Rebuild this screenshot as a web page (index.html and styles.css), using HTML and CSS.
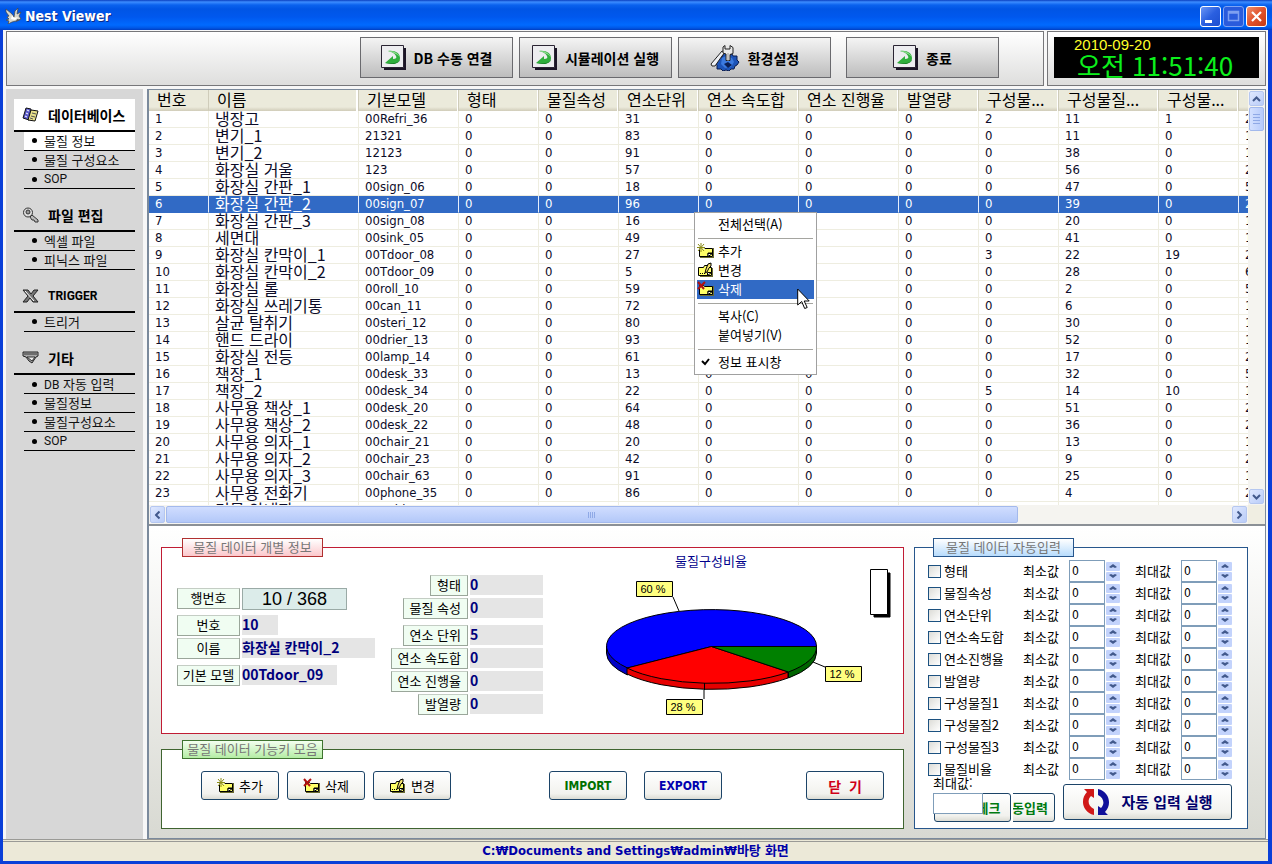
FILE: index.html
```html
<!DOCTYPE html>
<html lang="ko">
<head>
<meta charset="utf-8">
<title>Nest Viewer</title>
<link rel="stylesheet" href="styles.css">
</head>
<body>
<svg class="defs" aria-hidden="true">
  <symbol id="i-go" viewBox="0 0 25 25">
    <path d="M3 3h22v22H3z" fill="#1b1526"/>
    <path d="M.5.5h22v22H.5z" fill="#ededf0" stroke="#2a2433"/>
    <path d="M7 6c7-1 12 2 12 7s-6 7-15 5l8-7v3c3 0 4-1 3-3s-3-4-8-5z" fill="#2fae3c"/>
    <path d="M7 6c6 0 9 1 12 6-3-3-6-4-12-6z" fill="#8fdc8f"/>
    <path d="M4 18c9 1 14 0 15-4 0 5-8 6-15 4z" fill="#0d7a1c"/>
  </symbol>
  <symbol id="i-gear" viewBox="0 0 30 26">
    <path d="M14 8l3-1 1 3 4-1 1 2 4 0 0 4 2 2-2 3-2 1-1 3-3 0-2 2-3-1-3 1-2-2-4 0 0-4-2-2 3-3 0-3 4 0z" fill="#1d54b8" stroke="#0a1c50"/>
    <path d="M12 13l4-2 6 2 2 4-3 5-6 1-4-4z" fill="#3b7ae0"/>
    <path d="M14 19l4-2 4 3-4 3z" fill="#0b1f55"/>
    <path d="M1 19L12 6l3 1-3 4-7 10q-4 1-4-2z" fill="#eef0f4" stroke="#222"/>
    <path d="M13 2l2-1.500v3.500h5V.500l3 2v6l-3 1v6h-4V9l-3-1z" fill="#e8e8e8" stroke="#222"/>
    <path d="M18 8v8" stroke="#999"/>
  </symbol>
  <symbol id="i-note" viewBox="0 0 17 15">
    <path d="M3 15h14V5h-1v9H3z" fill="#6b6b30"/>
    <path d="M2.500 4.500h4l1 1h8v8h-13z" fill="#ffff66" stroke="#000"/>
    <path d="M11 13V10h4" fill="none" stroke="#000"/>
    <path d="M11 13.500v-3h4.500z" fill="#fff" stroke="#000"/>
  </symbol>
  <symbol id="i-add" viewBox="0 0 17 15">
    <use href="#i-note" width="17" height="15"/>
    <path d="M0 0h8v7H0z" fill="#fff" opacity=".5"/>
    <path d="M4 0v9M0 4.500h8M1 1l6 7M7 1L1 8" stroke="#8c8c18"/>
  </symbol>
  <symbol id="i-del" viewBox="0 0 17 15">
    <use href="#i-note" width="17" height="15"/>
    <path d="M1 1l6 7M8 1L1 8" stroke="#b01010" stroke-width="2"/>
  </symbol>
  <symbol id="i-edit" viewBox="0 0 17 15">
    <path d="M3 15h13V6h-1v8H3z" fill="#6b6b30"/>
    <path d="M1.500 5.500h5l1-2h3l1 2h3v8h-13z" fill="#ffff66" stroke="#000"/>
    <path d="M3 11.500h1m1 0h1m1 0h1" stroke="#000"/>
    <path d="M8 11l1-4 2-5 3-1 0 3-2 2-2 4z" fill="#f2e070" stroke="#000"/>
    <path d="M10.500 13.500v-3h4z" fill="#fff" stroke="#000"/>
  </symbol>
  <symbol id="i-up" viewBox="0 0 9 6"><path d="M1 5l3.500-3.500L8 5" fill="none" stroke="#42598c" stroke-width="2"/></symbol>
</svg>

<div class="window">
  <header class="titlebar">
    <svg width="17" height="16" viewBox="0 0 17 16" aria-hidden="true">
      <path d="M1 1l6 5 2 3 1-6 3-3-1 6 4-2-2 4 2 3-5 2-4 1-4 2 1-3-3-1 3-1-2-2 2-1-3-4z" fill="#d8d8d0" stroke="#444" stroke-width=".7"/>
      <path d="M7 7l2 3 4-1-3 3-4-1z" fill="#fff"/>
      <path d="M12 11l3 1-4 2z" fill="#555"/>
    </svg>
    <h1>Nest Viewer</h1>
    <div class="caption-buttons">
      <button class="cap" type="button" aria-label="최소화"><svg width="19" height="19"><path d="M4 13h7v3H4z" fill="#fff"/></svg></button>
      <button class="cap cap-off" type="button" aria-label="최대화" disabled><svg width="19" height="19"><path d="M4.500 4.500h10v9h-10zM4 6h11" fill="none" stroke="#7d9ff0" stroke-width="1.500"/></svg></button>
      <button class="cap cap-close" type="button" aria-label="닫기"><svg width="19" height="19"><path d="M5 5l9 9M14 5l-9 9" stroke="#fff" stroke-width="2.200"/></svg></button>
    </div>
  </header>

  <div class="client">
    <div class="top">
      <div class="toolbar">
        <button class="tool" type="button"><svg width="25" height="25"><use href="#i-go"/></svg>DB 수동 연결</button>
        <button class="tool" type="button"><svg width="25" height="25"><use href="#i-go"/></svg>시뮬레이션 실행</button>
        <button class="tool tool-set" type="button"><svg width="30" height="26"><use href="#i-gear"/></svg>환경설정</button>
        <button class="tool" type="button"><svg width="25" height="25"><use href="#i-go"/></svg>종료</button>
      </div>
      <div class="clock"><div class="lcd"><div class="date">2010-09-20</div><div class="time">오전 11:51:40</div></div></div>
    </div>

    <div class="middle">
      <nav class="side">
        <section>
          <h2 class="current"><svg width="17" height="16" viewBox="0 0 17 16"><path d="M4 1l5 1-2 11-6-2z" fill="#5a5ac8" stroke="#111"/><path d="M5 3l2 1M4 6l2 1M3 9l2 1" stroke="#fff"/><path d="M9 3l7 1-3 10-7-1z" fill="#e8e08a" stroke="#111"/><path d="M10 6l4 1M9 9l4 1M8 11l3 1" stroke="#555"/></svg>데이터베이스</h2>
          <ul><li class="current"><a href="#">물질 정보</a></li><li><a href="#">물질 구성요소</a></li><li><a class="latin" href="#">SOP</a></li></ul>
        </section>
        <section>
          <h2><svg width="17" height="16" viewBox="0 0 17 16"><circle cx="6" cy="5.500" r="4.500" fill="#ddd" stroke="#333"/><circle cx="6" cy="5" r="2" fill="#999" stroke="#333"/><path d="M8 10l2-2 6 5v2h-3l-1-2-2 0z" fill="#bbb" stroke="#333"/></svg>파일 편집</h2>
          <ul><li><a href="#">엑셀 파일</a></li><li><a href="#">피닉스 파일</a></li></ul>
        </section>
        <section>
          <h2 class="latin"><svg width="17" height="14" viewBox="0 0 17 14"><path d="M1 1h5l3 4 3-4h4l-5 6 5 6h-5l-3-4-3 4H1l5-6z" fill="#777" stroke="#222"/><path d="M3 2l9 10" stroke="#fff"/></svg>TRIGGER</h2>
          <ul><li><a href="#">트리거</a></li></ul>
        </section>
        <section>
          <h2><svg width="17" height="13" viewBox="0 0 17 13"><path d="M1 1h15v4l-2 1-4 6-3-2-3-4-3-1z" fill="#aaa" stroke="#222"/><path d="M2 3h13M5 6h8l-3 4z" fill="#eee" stroke="#333"/></svg>기타</h2>
          <ul><li><a href="#"><span><span class="latin">DB</span> 자동 입력</span></a></li><li><a href="#">물질정보</a></li><li><a href="#">물질구성요소</a></li><li><a class="latin" href="#">SOP</a></li></ul>
        </section>
      </nav>

      <main>
        <div class="grid-pane">
          <div class="viewport">
            <table>
              <colgroup><col class="w60"><col class="w150"><col class="w100"><col class="w80"><col class="w80"><col class="w80"><col class="w100"><col class="w100"><col class="w80"><col class="w80"><col class="w100"><col class="w80"><col class="w80"></colgroup>
              <thead><tr><th>번호<th>이름<th>기본모델<th>형태<th>물질속성<th>연소단위<th>연소 속도합<th>연소 진행율<th>발열량<th>구성물...<th>구성물질...<th>구성물...<th></tr></thead>
              <tbody>
              <tr><td>1<td>냉장고<td>00Refri_36<td>0<td>0<td>31<td>0<td>0<td>0<td>2<td>11<td>1<td>2
              <tr><td>2<td>변기_1<td>21321<td>0<td>0<td>83<td>0<td>0<td>0<td>0<td>11<td>0<td>1
              <tr><td>3<td>변기_2<td>12123<td>0<td>0<td>91<td>0<td>0<td>0<td>0<td>38<td>0<td>1
              <tr><td>4<td>화장실 거울<td>123<td>0<td>0<td>57<td>0<td>0<td>0<td>0<td>56<td>0<td>2
              <tr><td>5<td>화장실 간판_1<td>00sign_06<td>0<td>0<td>18<td>0<td>0<td>0<td>0<td>47<td>0<td>5
              <tr class="sel"><td>6<td>화장실 간판_2<td>00sign_07<td>0<td>0<td>96<td>0<td>0<td>0<td>0<td>39<td>0<td>2
              <tr><td>7<td>화장실 간판_3<td>00sign_08<td>0<td>0<td>16<td>0<td>0<td>0<td>0<td>20<td>0<td>1
              <tr><td>8<td>세면대<td>00sink_05<td>0<td>0<td>49<td>0<td>0<td>0<td>0<td>41<td>0<td>1
              <tr><td>9<td>화장실 칸막이_1<td>00Tdoor_08<td>0<td>0<td>27<td>0<td>0<td>0<td>3<td>22<td>19<td>2
              <tr><td>10<td>화장실 칸막이_2<td>00Tdoor_09<td>0<td>0<td>5<td>0<td>0<td>0<td>0<td>28<td>0<td>6
              <tr><td>11<td>화장실 롤<td>00roll_10<td>0<td>0<td>59<td>0<td>0<td>0<td>0<td>2<td>0<td>5
              <tr><td>12<td>화장실 쓰레기통<td>00can_11<td>0<td>0<td>72<td>0<td>0<td>0<td>0<td>6<td>0<td>1
              <tr><td>13<td>살균 탈취기<td>00steri_12<td>0<td>0<td>80<td>0<td>0<td>0<td>0<td>30<td>0<td>1
              <tr><td>14<td>핸드 드라이<td>00drier_13<td>0<td>0<td>93<td>0<td>0<td>0<td>0<td>52<td>0<td>1
              <tr><td>15<td>화장실 전등<td>00lamp_14<td>0<td>0<td>61<td>0<td>0<td>0<td>0<td>17<td>0<td>2
              <tr><td>16<td>책장_1<td>00desk_33<td>0<td>0<td>13<td>0<td>0<td>0<td>0<td>32<td>0<td>5
              <tr><td>17<td>책장_2<td>00desk_34<td>0<td>0<td>22<td>0<td>0<td>0<td>5<td>14<td>10<td>1
              <tr><td>18<td>사무용 책상_1<td>00desk_20<td>0<td>0<td>64<td>0<td>0<td>0<td>0<td>51<td>0<td>2
              <tr><td>19<td>사무용 책상_2<td>00desk_22<td>0<td>0<td>48<td>0<td>0<td>0<td>0<td>36<td>0<td>2
              <tr><td>20<td>사무용 의자_1<td>00chair_21<td>0<td>0<td>20<td>0<td>0<td>0<td>0<td>13<td>0<td>1
              <tr><td>21<td>사무용 의자_2<td>00chair_23<td>0<td>0<td>42<td>0<td>0<td>0<td>0<td>9<td>0<td>2
              <tr><td>22<td>사무용 의자_3<td>00chair_63<td>0<td>0<td>91<td>0<td>0<td>0<td>0<td>25<td>0<td>1
              <tr><td>23<td>사무용 전화기<td>00phone_35<td>0<td>0<td>86<td>0<td>0<td>0<td>0<td>4<td>0<td>2
              <tr><td>24<td>건물 안내판<td>00guide_24<td>0<td>0<td>10<td>0<td>0<td>0<td>0<td>8<td>0<td>1
              </tbody>
            </table>
          </div>
          <div class="vbar">
            <button class="arrow" type="button" aria-label="위로"><svg width="9" height="6"><use href="#i-up"/></svg></button>
            <div class="thumb"></div>
            <button class="arrow last" type="button" aria-label="아래로"><svg class="to-down" width="9" height="6"><use href="#i-up"/></svg></button>
          </div>
          <div class="hbar">
            <button class="arrow" type="button" aria-label="왼쪽"><svg class="to-left" width="9" height="6"><use href="#i-up"/></svg></button>
            <div class="thumb"></div>
            <button class="arrow last" type="button" aria-label="오른쪽"><svg class="to-right" width="9" height="6"><use href="#i-up"/></svg></button>
          </div>

          <div class="menu" role="menu">
            <button type="button" role="menuitem"><span></span>전체선택(A)</button>
            <hr>
            <button type="button" role="menuitem"><span><svg width="17" height="15"><use href="#i-add"/></svg></span>추가</button>
            <button type="button" role="menuitem"><span><svg width="17" height="15"><use href="#i-edit"/></svg></span>변경</button>
            <button class="hot" type="button" role="menuitem"><span><svg width="17" height="15"><use href="#i-del"/></svg></span>삭제</button>
            <hr>
            <button type="button" role="menuitem"><span></span>복사(C)</button>
            <button type="button" role="menuitem"><span></span>붙여넣기(V)</button>
            <hr>
            <button type="button" role="menuitem"><span><svg width="17" height="9"><path d="M5 4l3 3 4-5" fill="none" stroke="#000" stroke-width="2"/></svg></span>정보 표시창</button>
            <svg class="pointer" width="13" height="22" viewBox="0 0 13 22"><path d="M.700 1v16l4-3.500 3 7 2.500-1-3-6.500h5z" fill="#fff" stroke="#000"/></svg>
          </div>
        </div>

        <div class="panel">
          <fieldset class="red">
            <legend><span>물질 데이터 개별 정보</span></legend>
            <div class="detail">
              <dl class="ident">
                <dt>행번호</dt><dd class="pos">10 / 368</dd>
                <dt>번호</dt><dd class="short">10</dd>
                <dt>이름</dt><dd>화장실 칸막이_2</dd>
                <dt>기본 모델</dt><dd class="mid">00Tdoor_09</dd>
              </dl>
              <dl class="props">
                <dt>형태</dt><dd>0</dd>
                <dt>물질 속성</dt><dd>0</dd>
                <dt>연소 단위</dt><dd>5</dd>
                <dt>연소 속도합</dt><dd>0</dd>
                <dt>연소 진행율</dt><dd>0</dd>
                <dt>발열량</dt><dd>0</dd>
              </dl>
              <svg class="chart" width="345" height="176" viewBox="550 557 345 176" role="img" aria-label="물질구성비율">
                <text class="chart-title" x="711" y="566">물질구성비율</text>
                <g stroke="#000" stroke-width="1">
                  <path d="M673 597l6 14M704 690v9M813 662l12 5" fill="none"/>
                  <path d="M606.500 646v7a105 37 0 0 0 21 22v-7z" fill="#0000c8"/>
                  <path d="M816.500 646v7a105 37 0 0 1-28 25v-7z" fill="#006400"/>
                  <path d="M627 667v7a105 37 0 0 0 161 4v-7z" fill="#e60000"/>
                  <path d="M711.500 646.500h105a105 36.500 0 1 0-189 21.500z" fill="#0000ff"/>
                  <path d="M711.500 646.500L627 668a105 36.500 0 0 0 161.500 4z" fill="#ff0000"/>
                  <path d="M711.500 646.500L788.500 672a105 36.500 0 0 0 28-25.500z" fill="#008000"/>
                  <path d="M704.500 683v7"/>
                  <path d="M636.500 581.500h36v15h-36zM825.500 666.500h36v15h-36zM666.500 699.500h36v15h-36z" fill="#ffff80"/>
                  <path d="M874 573h16v44h-16z" fill="#000"/>
                  <path d="M870.500 569.500h17v45h-17z" fill="#fff"/>
                </g>
                <g class="chart-label"><text x="653" y="593">60 %</text><text x="842" y="678">12 %</text><text x="683" y="711">28 %</text></g>
              </svg>
            </div>
          </fieldset>

          <fieldset class="green">
            <legend><span>물질 데이터 기능키 모음</span></legend>
            <div class="keys">
              <button class="btn" type="button"><svg width="17" height="15"><use href="#i-add"/></svg>추가</button>
              <button class="btn" type="button"><svg width="17" height="15"><use href="#i-del"/></svg>삭제</button>
              <button class="btn" type="button"><svg width="17" height="15"><use href="#i-edit"/></svg>변경</button>
              <button class="btn import" type="button">IMPORT</button>
              <button class="btn export" type="button">EXPORT</button>
              <button class="btn close" type="button">닫&nbsp; 기</button>
            </div>
          </fieldset>

          <fieldset class="blue">
            <legend><span>물질 데이터 자동입력</span></legend>
            <div class="auto">
              <div class="row"><label><input type="checkbox">형태</label><label for="a1">최소값</label><input id="a1" type="text" value="0"><span class="spin"><button type="button" aria-label="증가"></button><button type="button" aria-label="감소"></button></span><label class="max" for="b1">최대값</label><input id="b1" type="text" value="0"><span class="spin"><button type="button" aria-label="증가"></button><button type="button" aria-label="감소"></button></span></div>
              <div class="row"><label><input type="checkbox">물질속성</label><label for="a2">최소값</label><input id="a2" type="text" value="0"><span class="spin"><button type="button" aria-label="증가"></button><button type="button" aria-label="감소"></button></span><label class="max" for="b2">최대값</label><input id="b2" type="text" value="0"><span class="spin"><button type="button" aria-label="증가"></button><button type="button" aria-label="감소"></button></span></div>
              <div class="row"><label><input type="checkbox">연소단위</label><label for="a3">최소값</label><input id="a3" type="text" value="0"><span class="spin"><button type="button" aria-label="증가"></button><button type="button" aria-label="감소"></button></span><label class="max" for="b3">최대값</label><input id="b3" type="text" value="0"><span class="spin"><button type="button" aria-label="증가"></button><button type="button" aria-label="감소"></button></span></div>
              <div class="row"><label><input type="checkbox">연소속도합</label><label for="a4">최소값</label><input id="a4" type="text" value="0"><span class="spin"><button type="button" aria-label="증가"></button><button type="button" aria-label="감소"></button></span><label class="max" for="b4">최대값</label><input id="b4" type="text" value="0"><span class="spin"><button type="button" aria-label="증가"></button><button type="button" aria-label="감소"></button></span></div>
              <div class="row"><label><input type="checkbox">연소진행율</label><label for="a5">최소값</label><input id="a5" type="text" value="0"><span class="spin"><button type="button" aria-label="증가"></button><button type="button" aria-label="감소"></button></span><label class="max" for="b5">최대값</label><input id="b5" type="text" value="0"><span class="spin"><button type="button" aria-label="증가"></button><button type="button" aria-label="감소"></button></span></div>
              <div class="row"><label><input type="checkbox">발열량</label><label for="a6">최소값</label><input id="a6" type="text" value="0"><span class="spin"><button type="button" aria-label="증가"></button><button type="button" aria-label="감소"></button></span><label class="max" for="b6">최대값</label><input id="b6" type="text" value="0"><span class="spin"><button type="button" aria-label="증가"></button><button type="button" aria-label="감소"></button></span></div>
              <div class="row"><label><input type="checkbox">구성물질1</label><label for="a7">최소값</label><input id="a7" type="text" value="0"><span class="spin"><button type="button" aria-label="증가"></button><button type="button" aria-label="감소"></button></span><label class="max" for="b7">최대값</label><input id="b7" type="text" value="0"><span class="spin"><button type="button" aria-label="증가"></button><button type="button" aria-label="감소"></button></span></div>
              <div class="row"><label><input type="checkbox">구성물질2</label><label for="a8">최소값</label><input id="a8" type="text" value="0"><span class="spin"><button type="button" aria-label="증가"></button><button type="button" aria-label="감소"></button></span><label class="max" for="b8">최대값</label><input id="b8" type="text" value="0"><span class="spin"><button type="button" aria-label="증가"></button><button type="button" aria-label="감소"></button></span></div>
              <div class="row"><label><input type="checkbox">구성물질3</label><label for="a9">최소값</label><input id="a9" type="text" value="0"><span class="spin"><button type="button" aria-label="증가"></button><button type="button" aria-label="감소"></button></span><label class="max" for="b9">최대값</label><input id="b9" type="text" value="0"><span class="spin"><button type="button" aria-label="증가"></button><button type="button" aria-label="감소"></button></span></div>
              <div class="row"><label><input type="checkbox">물질비율</label><label for="a10">최소값</label><input id="a10" type="text" value="0"><span class="spin"><button type="button" aria-label="증가"></button><button type="button" aria-label="감소"></button></span><label class="max" for="b10">최대값</label><input id="b10" type="text" value="0"><span class="spin"><button type="button" aria-label="증가"></button><button type="button" aria-label="감소"></button></span></div>
            </div>
            <div class="foot">
              <div class="foot-left">
                <label for="limit">최대값:</label>
                <div class="pair">
                  <button class="btn check" type="button">체크</button>
                  <span class="clip"><button class="btn" type="button">자동입력</button></span>
                  <input id="limit" type="text">
                </div>
              </div>
              <button class="btn run" type="button"><svg width="28" height="28" viewBox="0 0 28 28"><path d="M12 1v9L9 8C5 12 6 18 12 21v6C0 24-2 11 5 4L2 1z" fill="#d01818"/><path d="M16 27v-9l3 2c4-4 3-10-3-13V1c12 3 14 16 7 23l3 3z" fill="#10109a"/></svg>자동 입력 실행</button>
            </div>
          </fieldset>
        </div>
      </main>
    </div>
    <footer class="status">C:₩Documents and Settings₩admin₩바탕 화면</footer>
  </div>
</div>
</body>
</html>
```

FILE: styles.css
```css
* { box-sizing: border-box; }
body {
  margin: 0;
  font: 13px/16px "Noto Sans CJK KR", "Liberation Sans", sans-serif;
  color: #000;
}
button, input { font: inherit; color: inherit; margin: 0; padding: 0; }
h1, h2, ul, dl, dd { margin: 0; padding: 0; }
.defs { position: absolute; width: 0; height: 0; }

.window {
  display: flex;
  flex-direction: column;
  height: 100vh;
  min-height: 700px;
  min-width: 1100px;
  overflow: hidden;
  background: #0a3fd8;
}

/* title bar */
.titlebar {
  display: flex;
  align-items: center;
  gap: 3px;
  height: 30px;
  padding: 2px 5px 0;
  background: linear-gradient(#0a3fc0 0, #3c8cff 2px, #0a62ee 5px, #0055e5 9px, #0058ee 17px, #006aff 25px, #0057e6 28px, #003dc0 30px);
}
.titlebar h1 {
  flex: 1;
  font: bold 14px/16px "DejaVu Sans Condensed", sans-serif;
  color: #fff;
  text-shadow: 1px 1px #0a2a88;
}
.caption-buttons { display: flex; gap: 2px; }
.cap {
  width: 21px;
  height: 21px;
  border: 1px solid #fff;
  border-radius: 3px;
  background: linear-gradient(135deg, #6b96f5, #2a5fe0 50%, #1c4fd0);
}
.cap svg { display: block; }
.cap-off { border-color: #7da3f4; background: #2a5bdc; }
.cap-close { background: linear-gradient(135deg, #f0906c, #e0512c 50%, #c43a14); }

/* client area */
.client {
  flex: 1;
  min-height: 0;
  display: flex;
  flex-direction: column;
  margin: 0 4px 3px 3px;
  background: #f7f7f7;
}
.top { display: flex; gap: 3px; padding: 1px 2px 3px 3px; }
.toolbar, .clock {
  height: 55px;
  border: 1px solid #77777a;
  background: linear-gradient(#fff, #dededd);
}
.toolbar {
  flex: 1;
  display: flex;
  align-items: flex-start;
  justify-content: flex-end;
  gap: 6px;
  padding: 5px 44px 0 0;
}
.tool {
  display: flex;
  align-items: center;
  justify-content: center;
  gap: 8px;
  width: 153px;
  height: 41px;
  border: 1px solid #6a6a6e;
  background: linear-gradient(#f4f4f4, #bdbdbd);
  font-size: 14px;
  font-weight: bold;
  white-space: nowrap;
}
.tool-set { margin-right: 9px; }
.clock { width: 219px; padding: 5px 6px; }
.lcd { height: 41px; padding: 0 0 0 20px; background: #000; }
.date { font: 15px/16px "Liberation Sans", sans-serif; color: #ffff2a; }
.time { padding-left: 3px; font-size: 26px; line-height: 24px; color: #0cf01c; }

.middle { flex: 1; min-height: 0; display: flex; gap: 4px; padding: 0 2px 0 3px; }

/* side menu */
.side { width: 137px; padding: 10px 8px; background: #d7d7d7; }
.side section { margin-bottom: 10px; }
.side h2 {
  display: flex;
  align-items: center;
  gap: 9px;
  height: 33px;
  padding-left: 8px;
  border-bottom: 2px solid #000;
  font-size: 14px;
  line-height: 18px;
}
.side h2 svg { flex: none; }
.side h2.latin { font: bold 12px/16px Roboto, sans-serif; }
.side ul { margin-left: 10px; list-style: none; }
.side li { height: 19px; border-bottom: 1px solid #000; line-height: 17px; }
.side .current { background: #fff; }
.side a { display: flex; align-items: center; gap: 5px; color: #111; text-decoration: none; }
.side a::before { content: ""; width: 5px; height: 5px; margin-left: 8px; margin-right: 2px; border-radius: 50%; background: #000; }
.side a.latin, .side span.latin { font: 12px/18px Roboto, sans-serif; }

/* data grid */
main { flex: 1; min-width: 0; display: flex; flex-direction: column; border: 1px solid #7b8a9c; border-width: 1px 1px 1px 2px; }
.grid-pane {
  position: relative;
  flex: 1;
  min-height: 0;
  display: grid;
  grid-template: minmax(0, 1fr) 19px / minmax(0, 1fr) 17px;
  background: #f0eee2;
  border-bottom: 2px solid #8b9096;
}
.viewport { overflow: hidden; background: #fff; }
table { table-layout: fixed; width: 1070px; border-collapse: separate; border-spacing: 0; }
.w60 { width: 60px; } .w80 { width: 80px; } .w100 { width: 100px; } .w150 { width: 150px; }
th {
  height: 21px;
  padding: 0 0 2px 8px;
  background: linear-gradient(90deg, transparent 98%, #fff 98%), linear-gradient(#ebeadb 17px, #d0ccb8);
  box-shadow: inset -1px 0 #cfccba;
  font-size: 16px;
  font-weight: normal;
  line-height: 19px;
  text-align: left;
  white-space: nowrap;
}
td {
  height: 17px;
  padding: 0 0 0 6px;
  border-right: 1px solid #eeede0;
  border-bottom: 1px solid #eeede0;
  font: 13px/16px "DejaVu Sans Condensed", sans-serif;
  color: #0c0c28;
  white-space: nowrap;
}
td:nth-child(2) { padding-bottom: 2px; font: 16px/14px "Noto Sans CJK KR", sans-serif; }
.sel td { background: #316ac5; color: #fff; border-bottom-color: #316ac5; border-right-color: #e6eefc; }

.vbar, .hbar { display: flex; background: #f5f4f0; padding: 1px; gap: 1px; }
.vbar { flex-direction: column; }
.arrow {
  display: grid;
  place-items: center;
  flex: none;
  width: 15px;
  height: 15px;
  border: 1px solid #b5c7f0;
  border-radius: 2px;
  background: linear-gradient(135deg, #dfe8ff, #b9ccf8);
}
.hbar .arrow { height: 17px; }
.vbar .last { margin-top: auto; }
.hbar .last { margin-left: auto; }
.to-down { transform: rotate(180deg); }
.to-left { transform: rotate(-90deg); }
.to-right { transform: rotate(90deg); }
.thumb { border: 1px solid #a3b9ec; border-radius: 2px; }
.vbar .thumb {
  width: 15px;
  height: 24px;
  background: repeating-linear-gradient(#8fa9e6 0 1px, transparent 1px 3px) center / 7px 10px no-repeat, linear-gradient(90deg, #d3e0ff, #b7cbfb);
}
.hbar .thumb {
  width: 77.7%;
  background: repeating-linear-gradient(90deg, #8fa9e6 0 1px, transparent 1px 2px) center / 8px 6px no-repeat, linear-gradient(#d0ddff, #b3c8f8);
}

/* context menu */
.menu {
  position: absolute;
  left: 545px;
  top: 122px;
  width: 123px;
  padding: 2px;
  border: 1px solid #a0a0a0;
  background: #fff;
}
.menu button {
  display: flex;
  align-items: center;
  width: 100%;
  height: 19px;
  padding-bottom: 2px;
  border: 0;
  background: none;
  text-align: left;
  white-space: nowrap;
}
.menu span { display: flex; width: 21px; }
.menu .hot { background: #316ac5; color: #fff; }
.menu hr { height: 1px; margin: 4px 1px 3px; border: 0; background: #a5a5a0; }
.pointer { position: absolute; left: 102px; top: 75px; }

/* lower panel */
.panel {
  display: grid;
  grid-template-columns: minmax(0, 1fr) 334px;
  grid-template-rows: 196px 89px;
  gap: 6px 10px;
  padding: 12px 17px 9px 12px;
  background: linear-gradient(#fff, #d8d9d2);
}
fieldset { min-width: 0; margin: 0; padding: 0; border: 1px solid; background: #fff; }
.red { border-color: #c01c34; }
.green { border-color: #3f6430; }
.blue { grid-area: 1 / 2 / 3 / 3; border-color: #27568c; }
legend {
  width: 141px;
  height: 19px;
  margin-left: 20px;
  padding: 0;
  border: 1px solid;
  color: #777;
  line-height: 16px;
}
legend span { display: block; text-align: center; white-space: nowrap; }
.blue legend { margin-left: 18px; }
.red legend { border-color: #b03030; background: linear-gradient(#fff, #fbc8cc); }
.green legend { border-color: #3f7430; background: linear-gradient(#f4fff0, #b4eda4); }
.blue legend { border-color: #27568c; background: linear-gradient(#fff, #b8dcfc); }

.detail { display: flex; padding-left: 15px; }
dl { display: grid; gap: 2px; align-content: start; }
dt {
  height: 21px;
  border: 1px solid #9aa69a;
  border-top-color: #c4cdc4;
  background: #f0fdf2;
  line-height: 18px;
  text-align: center;
}
dd { height: 20px; background: #e5e5e5; color: #00007c; font-size: 14px; font-weight: bold; line-height: 18px; white-space: nowrap; }
.ident { grid-template: 25px 21px 25px 21px / 63px 133px; padding-top: 31px; }
.props { grid-template: 21px 25px 21px 21px 21px 21px / 81px 73px; margin-left: 12px; padding-top: 18px; }
.props dt { justify-self: end; padding: 0 6px; }
.pos { width: 105px; height: 22px; border: 1px solid #9aaaa6; background: #dcecea; color: #000; font: 18px/20px "Liberation Sans", sans-serif; text-align: center; }
.short { width: 36px; }
.mid { width: 95px; }
.chart { flex: none; margin-left: 7px; overflow: visible; }
.chart-title { font: 13px "Noto Sans CJK KR", sans-serif; fill: #00008c; text-anchor: middle; }
.chart-label { font: 11px "Liberation Sans", sans-serif; text-anchor: middle; }

.btn {
  display: flex;
  align-items: center;
  justify-content: center;
  gap: 5px;
  width: 78px;
  height: 29px;
  border: 1px solid #1c4468;
  border-radius: 3px;
  background: linear-gradient(#fff, #f2f2ee 80%, #dcdcd4);
  white-space: nowrap;
}
.keys { display: flex; gap: 8px; padding: 12px 19px 0 39px; }
.import { margin-left: 90px; color: #007000; font: bold 12px/16px "DejaVu Sans Condensed", sans-serif; }
.export { margin-left: 9px; color: #0000b0; font: bold 12px/16px "DejaVu Sans Condensed", sans-serif; }
.close { margin-left: auto; color: #d00018; font-size: 14px; font-weight: bold; }

.auto { padding: 3px 0 0 13px; }
.row {
  display: grid;
  grid-template-columns: 95px 46px 36px 15px 15px 46px 36px 15px;
  align-items: center;
  height: 22px;
}
.row label { display: flex; align-items: center; gap: 3px; white-space: nowrap; }
.row .max { grid-column: 6; }
input[type="checkbox"] {
  appearance: none;
  width: 13px;
  height: 13px;
  border: 1px solid #1c5180;
  background: linear-gradient(135deg, #dcdcd7, #fff);
}
input[type="text"] {
  width: 100%;
  height: 22px;
  padding: 0 2px;
  border: 1px solid #7f9db9;
  background: #fff;
  font: 12px/16px "DejaVu Sans Condensed", sans-serif;
}
.spin { display: grid; gap: 1px; padding-left: 1px; }
.spin button {
  height: 9px;
  border: 0;
  border-radius: 1px;
  background: #c3d3fc;
  display: grid;
  place-items: center;
}
.spin button::before {
  content: "";
  width: 8px;
  height: 4px;
  background: #42598c;
  clip-path: polygon(50% 0, 100% 75%, 75% 100%, 50% 75%, 25% 100%, 0 75%);
}
.spin button:last-child::before { transform: rotate(180deg); }

.foot { display: flex; gap: 8px; padding: 4px 15px 0 18px; }
.foot-left { width: 122px; margin-top: -8px; }
.foot-left label { display: block; font-size: 13px; line-height: 14px; }
.pair { position: relative; display: flex; gap: 2px; margin-top: 3px; padding-left: 1px; color: #007a10; font-size: 13px; font-weight: bold; }
.pair .check { justify-content: flex-end; padding-right: 10px; }
.pair #limit { position: absolute; left: 0; top: 0; width: 50px; height: 21px; }
.clip { display: flex; justify-content: flex-end; width: 42px; overflow: hidden; }
.clip .btn { flex: none; padding: 0 6px; justify-content: flex-end; }
.run { flex: 1; height: 36px; gap: 11px; color: #00006c; font-size: 15px; font-weight: bold; }

/* status line */
.status {
  height: 22px;
  border-top: 3px double #9a9a96;
  background: #ece9d8;
  color: #0000a8;
  font: bold 13px/18px "DejaVu Sans Condensed", "Noto Sans CJK KR", sans-serif;
  text-align: center;
}
```
